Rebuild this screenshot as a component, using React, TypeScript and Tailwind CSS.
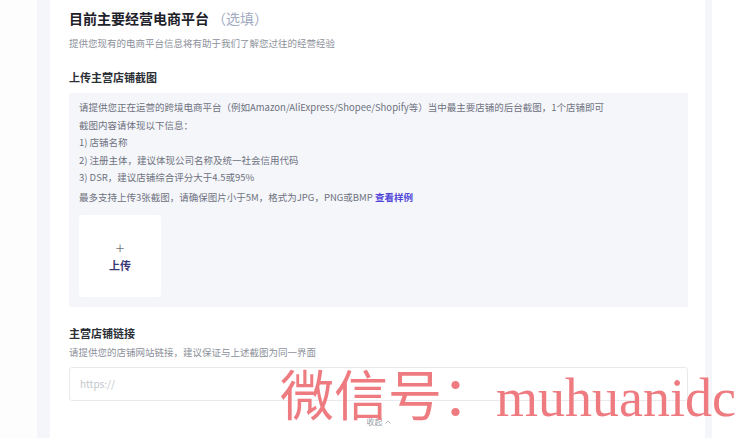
import React from "react";

const sans = { fontFamily: '"Noto Sans CJK SC", "Noto Sans", sans-serif' };

export default function App() {
  return (
    <div className="relative flex h-[438px] w-[754px] overflow-hidden bg-white" style={sans}>
      <div className="w-[37px] shrink-0 bg-[#fdfdfe]" />
      <div className="w-[13px] shrink-0 bg-[#f5f6f9]" />
      <div className="flex w-[655px] shrink-0 flex-col bg-white pl-[19px] pr-[17px]">
        <div className="mt-[8px] flex h-[20px] items-center text-[14px] leading-[20px]">
          <span className="font-bold text-[#1d2129]">目前主要经营电商平台</span>
          <span className="ml-[3px] text-[#a3abc2]">（选填）</span>
        </div>
        <div className="mt-[7px] h-[16px] text-[9.5px] leading-[16px] text-[#8c909a]">
          提供您现有的电商平台信息将有助于我们了解您过往的经营经验
        </div>
        <div className="mt-[18px] h-[16px] text-[11px] font-bold leading-[16px] text-[#2b2f36]">
          上传主营店铺截图
        </div>
        <div className="mt-[8px] flex flex-col bg-[#f5f6fa] px-[10px] pb-[10px] pt-[6px] text-[9.5px] leading-[17.5px] text-[#6e7280]">
          <div>请提供您正在运营的跨境电商平台（例如Amazon/AliExpress/Shopee/Shopify等）当中最主要店铺的后台截图，1个店铺即可</div>
          <div>截图内容请体现以下信息：</div>
          <div>1) 店铺名称</div>
          <div>2) 注册主体，建议体现公司名称及统一社会信用代码</div>
          <div>3) DSR，建议店铺综合评分大于4.5或95%</div>
          <div className="mt-[2.5px]">
            最多支持上传3张截图，请确保图片小于5M，格式为JPG，PNG或BMP{" "}
            <span className="font-bold text-[#5247d8]">查看样例</span>
          </div>
          <div className="mt-[8px] flex h-[82px] w-[82px] flex-col items-center justify-center rounded-[3px] bg-white">
            <span className="text-[16px] font-light leading-[16px] text-[#70737d]">+</span>
            <span className="mt-[2px] text-[11px] font-bold leading-[16px] text-[#3b3878]">上传</span>
          </div>
        </div>
        <div className="mt-[18px] h-[16px] text-[11px] font-bold leading-[16px] text-[#2b2f36]">
          主营店铺链接
        </div>
        <div className="mt-[3px] h-[16px] text-[9.5px] leading-[16px] text-[#8c909a]">
          请提供您的店铺网站链接，建议保证与上述截图为同一界面
        </div>
        <div className="mt-[7px] flex h-[34px] items-center rounded-[3px] border border-[#e9eaee] px-[10px] text-[10px] text-[#c3c6cd]">
          https://
        </div>
        <div className="mt-[15px] flex h-[12px] items-center justify-center gap-[2px] text-[8px] leading-[12px] text-[#9a9ea8]">
          <span>收起</span>
          <svg width="6" height="4" viewBox="0 0 6 4" fill="none">
            <path d="M0.5 3.5 L3 1 L5.5 3.5" stroke="#a0a4ad" strokeWidth="0.8" />
          </svg>
        </div>
      </div>
      <div className="w-[7px] shrink-0 bg-[#f5f6f9]" />
      <div className="flex-1 bg-white" />
      <div
        className="pointer-events-none absolute left-[280px] top-[368px] whitespace-nowrap text-[54px] leading-[60px] text-[#ee7b80]"
        style={{ fontFamily: '"Liberation Serif", "Noto Sans CJK SC", serif' }}
      >
        微信号：muhuanidc
      </div>
    </div>
  );
}
